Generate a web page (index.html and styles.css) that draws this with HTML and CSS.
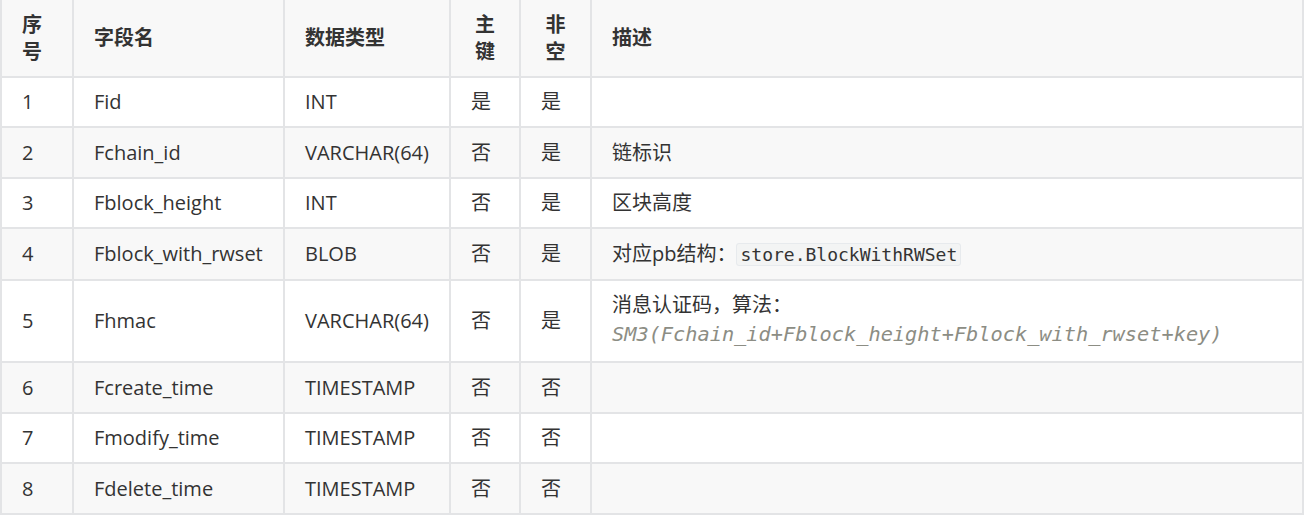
FILE: index.html
```html
<!DOCTYPE html>
<html lang="zh">
<head>
<meta charset="utf-8">
<title>表结构</title>
<link rel="stylesheet" href="styles.css">
</head>
<body>
<table class="schema">
  <colgroup>
    <col class="c-no">
    <col class="c-name">
    <col class="c-type">
    <col class="c-pk">
    <col class="c-nn">
    <col class="c-desc">
  </colgroup>
  <thead>
    <tr>
      <th>序号</th>
      <th>字段名</th>
      <th>数据类型</th>
      <th class="center">主键</th>
      <th class="center">非空</th>
      <th>描述</th>
    </tr>
  </thead>
  <tbody>
    <tr>
      <td>1</td><td>Fid</td><td>INT</td><td class="center">是</td><td class="center">是</td><td></td>
    </tr>
    <tr>
      <td>2</td><td>Fchain_id</td><td>VARCHAR(64)</td><td class="center">否</td><td class="center">是</td><td>链标识</td>
    </tr>
    <tr>
      <td>3</td><td>Fblock_height</td><td>INT</td><td class="center">否</td><td class="center">是</td><td>区块高度</td>
    </tr>
    <tr>
      <td>4</td><td>Fblock_with_rwset</td><td>BLOB</td><td class="center">否</td><td class="center">是</td><td>对应pb结构：<code class="code">store.BlockWithRWSet</code></td>
    </tr>
    <tr>
      <td>5</td><td>Fhmac</td><td>VARCHAR(64)</td><td class="center">否</td><td class="center">是</td><td>消息认证码，算法：<br><span class="formula">SM3(Fchain_id+Fblock_height+Fblock_with_rwset+key)</span></td>
    </tr>
    <tr>
      <td>6</td><td>Fcreate_time</td><td>TIMESTAMP</td><td class="center">否</td><td class="center">否</td><td></td>
    </tr>
    <tr>
      <td>7</td><td>Fmodify_time</td><td>TIMESTAMP</td><td class="center">否</td><td class="center">否</td><td></td>
    </tr>
    <tr>
      <td>8</td><td>Fdelete_time</td><td>TIMESTAMP</td><td class="center">否</td><td class="center">否</td><td></td>
    </tr>
  </tbody>
</table>
</body>
</html>
```

FILE: styles.css
```css
html, body {
  margin: 0;
  padding: 0;
  background: #ffffff;
}

body {
  font-family: "Open Sans", "Noto Sans CJK SC", sans-serif;
  font-size: 20px;
  line-height: 27.2px;
  color: #333333;
}

.schema {
  table-layout: fixed;
  width: 1304px;
  border-collapse: separate;
  border-spacing: 0;
  border-left: 2px solid #e3e4e6;
}

.c-no { width: 72px; }
.c-name { width: 211px; }
.c-type { width: 166px; }
.c-pk { width: 70px; }
.c-nn { width: 71px; }
.c-desc { width: 712px; }

.schema th,
.schema td {
  box-sizing: border-box;
  padding: 10.65px 20px;
  text-align: left;
  vertical-align: middle;
  border-right: 2px solid #e3e4e6;
  border-bottom: 2px solid #e3e4e6;
  word-break: break-all;
}

.schema th {
  font-weight: 700;
  background: #f8f8f8;
}

.schema th.center {
  text-align: center;
}

.schema tbody tr:nth-child(even) td {
  background: #f8f8f8;
}

.code {
  font-family: "DejaVu Sans Mono", monospace;
  font-size: 18px;
  background: #f3f4f4;
  border: 1px solid #e7eaed;
  border-radius: 3px;
  padding: 0 3px;
  color: #333333;
}

.formula {
  font-family: "DejaVu Sans Mono", monospace;
  font-style: italic;
  font-size: 20.3px;
  line-height: 32px;
  color: #8c8d84;
  white-space: nowrap;
}
```
